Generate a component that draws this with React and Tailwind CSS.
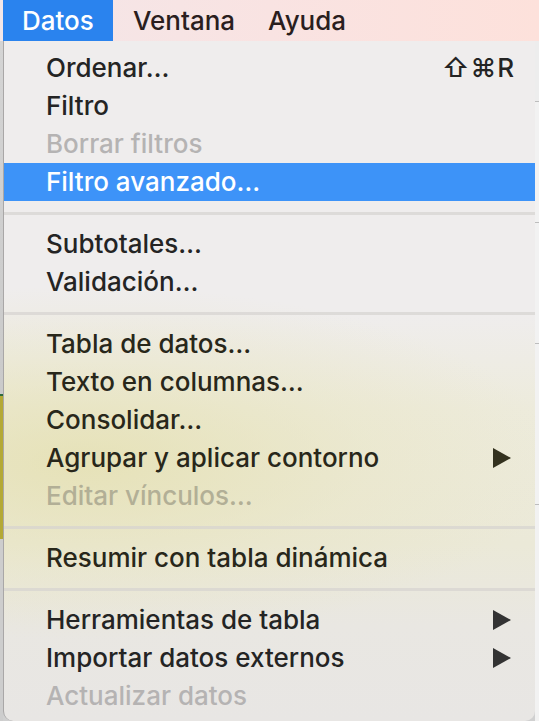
import React from "react";

const font = { fontFamily: "Inter, 'Liberation Sans', sans-serif" };

function Row({ label, shortcut, submenu, disabled, active, tone = "default" }) {
  let color = "text-[#242424]";
  if (disabled) color = tone === "yellow" ? "text-[#b2af96]" : "text-[#b5b3b3]";
  else if (tone === "yellow") color = "text-[#28271a]";
  if (active) color = "text-white";
  return (
    <div
      className={`flex h-[38px] items-center pl-[42px] pr-[24px] text-[26px] font-[450] leading-none ${color} ${
        active ? "bg-[#3d93f8]" : ""
      }`}
    >
      <span className="flex-1 whitespace-nowrap">{label}</span>
      {shortcut && <span className="mr-[-4px] whitespace-nowrap tracking-[1px]">{shortcut}</span>}
      {submenu && (
        <svg width="18" height="20" viewBox="0 0 18 20">
          <path d="M0 0 L18 10 L0 20 Z" fill={tone === "yellow" ? "#33311e" : "#333333"} />
        </svg>
      )}
    </div>
  );
}

function Sep() {
  return (
    <div className="flex h-[24px] items-center">
      <div className="h-[3px] w-full bg-[#d6d3d0]/70" />
    </div>
  );
}

export default function App() {
  return (
    <div className="flex h-[721px] w-[539px] flex-col overflow-hidden bg-[#d0d0d0]" style={font}>
      {/* menu bar */}
      <div className="flex h-[41px] shrink-0 items-stretch bg-[linear-gradient(90deg,#f3e6e8,#f9e3e2_50%,#fde1db)] text-[26px] font-[450] leading-none text-[#2a1e1e]">
        <div className="w-[3px] shrink-0" />
        <div className="flex w-[110px] items-center bg-[#2a83ee] pl-[19px] text-white">Datos</div>
        <div className="flex w-[135px] items-center pl-[20px]">Ventana</div>
        <div className="flex items-center pl-[20px]">Ayuda</div>
      </div>
      <div className="flex flex-1">
        {/* left strip of the window behind */}
        <div className="flex w-[3px] shrink-0 flex-col bg-[#cfcfcf]">
          <div className="h-[353px] bg-[linear-gradient(180deg,#d4d4d4,#cacaca)]" />
          <div className="h-[2px] bg-[#2f6b3f]" />
          <div className="h-[143px] bg-[#b4a936]" />
          <div className="flex-1 bg-[#cdcdcd]" />
        </div>
        {/* the menu */}
        <div className="flex flex-1 flex-col rounded-b-[10px] border-l border-[#a9a7a7] bg-[radial-gradient(ellipse_90%_26%_at_15%_62%,rgba(228,223,172,0.75),rgba(232,228,188,0.35)_60%,rgba(236,233,215,0)_100%),linear-gradient(180deg,#efeded_0%,#efeded_40%,#edebdc_54%,#ebe9d8_74%,#e9e7e2_86%,#e8e6e4_100%)] pt-[8px]">
          <Row label="Ordenar…" shortcut="⇧⌘R" />
          <Row label="Filtro" />
          <Row label="Borrar filtros" disabled />
          <Row label="Filtro avanzado…" active />
          <Sep />
          <Row label="Subtotales…" />
          <Row label="Validación…" />
          <Sep />
          <Row label="Tabla de datos…" tone="yellow" />
          <Row label="Texto en columnas…" tone="yellow" />
          <Row label="Consolidar…" tone="yellow" />
          <Row label="Agrupar y aplicar contorno" submenu tone="yellow" />
          <Row label="Editar vínculos…" disabled tone="yellow" />
          <Sep />
          <Row label="Resumir con tabla dinámica" tone="yellow" />
          <Sep />
          <Row label="Herramientas de tabla" submenu />
          <Row label="Importar datos externos" submenu />
          <Row label="Actualizar datos" disabled />
        </div>
        {/* right strip of the window behind */}
        <div className="flex w-[4px] shrink-0 flex-col bg-[#f2f2f2]">
          <div className="h-[60px] bg-[#ededed]" />
          <div className="h-[1px] bg-[#bdbdbd]" />
          <div className="h-[120px]" />
          <div className="h-[1px] bg-[#bdbdbd]" />
          <div className="h-[120px]" />
          <div className="h-[1px] bg-[#bdbdbd]" />
          <div className="h-[160px]" />
          <div className="h-[1px] bg-[#bdbdbd]" />
          <div className="flex-1" />
        </div>
      </div>
    </div>
  );
}
